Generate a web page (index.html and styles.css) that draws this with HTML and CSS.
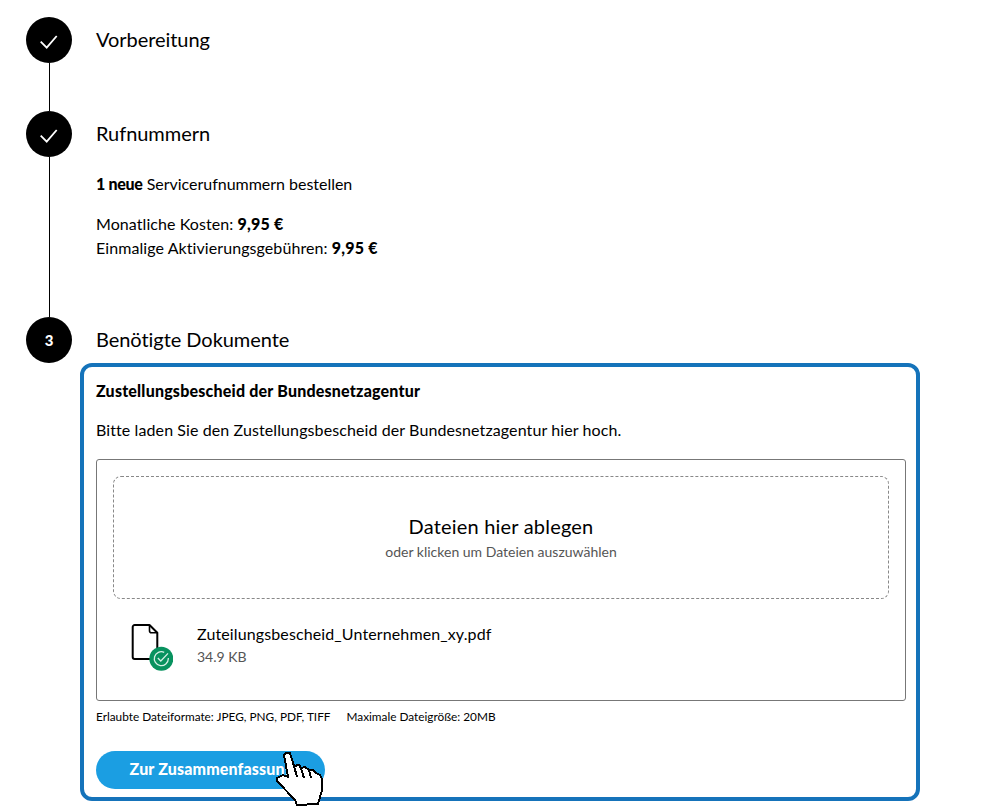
FILE: index.html
```html
<!DOCTYPE html>
<html lang="de">
<head>
<meta charset="utf-8">
<title>Dokumente</title>
<link rel="stylesheet" href="styles.css">
</head>
<body>
<main class="steps">
  <section class="step step-first">
    <div class="rail">
      <div class="badge"><svg class="check" viewBox="0 0 20 24" width="20" height="24"><path d="M1.7 13.7l6 6L17.7 8" fill="none" stroke="#fff" stroke-width="1.8"/></svg></div>
      <div class="line"></div>
    </div>
    <div class="content"><h2 class="heading">Vorbereitung</h2></div>
  </section>
  <section class="step step-second">
    <div class="rail">
      <div class="badge"><svg class="check" viewBox="0 0 20 24" width="20" height="24"><path d="M1.7 13.7l6 6L17.7 8" fill="none" stroke="#fff" stroke-width="1.8"/></svg></div>
      <div class="line"></div>
    </div>
    <div class="content">
      <h2 class="heading">Rufnummern</h2>
      <p class="order"><b>1 neue</b> Servicerufnummern bestellen</p>
      <p class="costs">Monatliche Kosten: <b>9,95 €</b><br>Einmalige Aktivierungsgebühren: <b>9,95 €</b></p>
    </div>
  </section>
  <section class="step step-third">
    <div class="rail">
      <div class="badge badge-num">3</div>
    </div>
    <div class="content">
      <h2 class="heading">Benötigte Dokumente</h2>
      <div class="card">
        <h3 class="card-title">Zustellungsbescheid der Bundesnetzagentur</h3>
        <p class="card-text">Bitte laden Sie den Zustellungsbescheid der Bundesnetzagentur hier hoch.</p>
        <div class="upload">
          <div class="drop">
            <div class="drop-title">Dateien hier ablegen</div>
            <div class="drop-sub">oder klicken um Dateien auszuwählen</div>
          </div>
          <div class="file">
            <svg class="file-icon" viewBox="0 0 42 50" width="42" height="50">
              <path d="M3.7 3H18.5L26.3 10.8V35a2 2 0 0 1-2 2H3.7a2 2 0 0 1-2-2V5a2 2 0 0 1 2-2z" fill="#fff" stroke="#000" stroke-width="2" stroke-linejoin="round"/>
              <path d="M18.5 3.5v5.3a2 2 0 0 0 2 2h5.5" fill="none" stroke="#000" stroke-width="1.6"/>
              <circle cx="30.3" cy="36.7" r="12" fill="#08925f"/>
              <path d="M37.3 36v.7a7 7 0 1 1-4.1-6.4" fill="none" stroke="#d5efe5" stroke-width="1.3"/>
              <path d="M26.8 36l3 3 7.2-7.6" fill="none" stroke="#d5efe5" stroke-width="1.3"/>
            </svg>
            <div class="file-info">
              <div class="file-name">Zuteilungsbescheid_Unternehmen_xy.pdf</div>
              <div class="file-size">34.9 KB</div>
            </div>
          </div>
        </div>
        <div class="hints"><span>Erlaubte Dateiformate: JPEG, PNG, PDF, TIFF</span><span>Maximale Dateigröße: 20MB</span></div>
        <button class="submit" type="button">Zur Zusammenfassung</button>
      </div>
    </div>
  </section>
</main>
<svg class="cursor" viewBox="0 0 50 58" width="50" height="58" shape-rendering="crispEdges">
  <path d="M9 5L11 3H15L19 16L24 15L26 18L30 17L34 20L38 20L41 23L45 25L47 29V40L45 47L43 54L22 55L20 50L2 31V28L8 25L13 27Z" fill="#fff" stroke="#000" stroke-width="2" stroke-linejoin="miter"/>
  <path d="M19 16L22 27M26 18L29 28M34 20L36 28" fill="none" stroke="#000" stroke-width="2"/>
</svg>
</body>
</html>
```
FILE: styles.css
```css
* { box-sizing: border-box; }
html, body { margin: 0; height: 809px; overflow: hidden; background: #fff; }
body { font-family: Lato, "Liberation Sans", sans-serif; color: #000; position: relative; }
.steps { padding: 17px 0 0 26px; display: flex; flex-direction: column; width: 894px; }
.step { display: flex; gap: 24px; }
.step-first { height: 94px; }
.step-second { height: 206px; }
.rail { width: 46px; flex: none; display: flex; flex-direction: column; align-items: center; }
.badge { width: 46px; height: 46px; border-radius: 50%; background: #000; color: #fff; display: flex; align-items: center; justify-content: center; flex: none; }
.badge-num { font-weight: 900; font-size: 15px; }
.line { width: 1px; flex: 1; background: #000; }
.content { flex: 1; min-width: 0; }
.heading { margin: 0; font-size: 20px; font-weight: 400; line-height: 44px; letter-spacing: -0.05px; }
.order { margin: 17px 0 0; font-size: 16px; line-height: 24px; letter-spacing: -0.02px; }
.costs { margin: 16px 0 0; font-size: 16px; line-height: 24px; letter-spacing: 0.08px; }
.order b { font-weight: 900; letter-spacing: -0.3px; }
.costs b { font-weight: 900; letter-spacing: 0.2px; }
.step-third .heading { margin-bottom: 2px; }
.card { margin-left: -16px; width: 840px; height: 438px; border: 4px solid #1573ba; border-radius: 12px; padding: 12px 12px 0; }
.card-title { margin: 0; font-size: 16px; font-weight: 900; line-height: 24px; letter-spacing: 0.2px; }
.card-text { margin: 15px 0 0; font-size: 16px; line-height: 24px; letter-spacing: 0.1px; }
.upload { margin-top: 17px; height: 242px; border: 1px solid #777; border-radius: 3px; padding: 16px; width: 810px; }
.drop { height: 123px; border: 1px dashed #888; border-radius: 8px; display: flex; flex-direction: column; align-items: center; padding-top: 36px; }
.drop-title { font-size: 20px; line-height: 26px; letter-spacing: 0.2px; }
.drop-sub { margin-top: 1px; font-size: 14px; line-height: 24px; color: #555; }
.file { display: flex; gap: 24px; align-items: flex-start; padding: 23px 0 0 18px; }
.file-name { font-size: 16px; line-height: 24px; letter-spacing: 0.12px; }
.file-size { font-size: 14px; line-height: 22px; color: #555; }
.hints { margin-top: 6px; display: flex; gap: 16px; font-size: 11.8px; line-height: 20px; }
.submit { display: block; margin-top: 24px; width: 229px; height: 38px; border: 0; border-radius: 19px; background: #1b9ee2; color: #fff; font: 900 16px Lato, "Liberation Sans", sans-serif; letter-spacing: 0.15px; padding: 0 0 3px 2px; }
.cursor { position: absolute; left: 275px; top: 750px; }
```
